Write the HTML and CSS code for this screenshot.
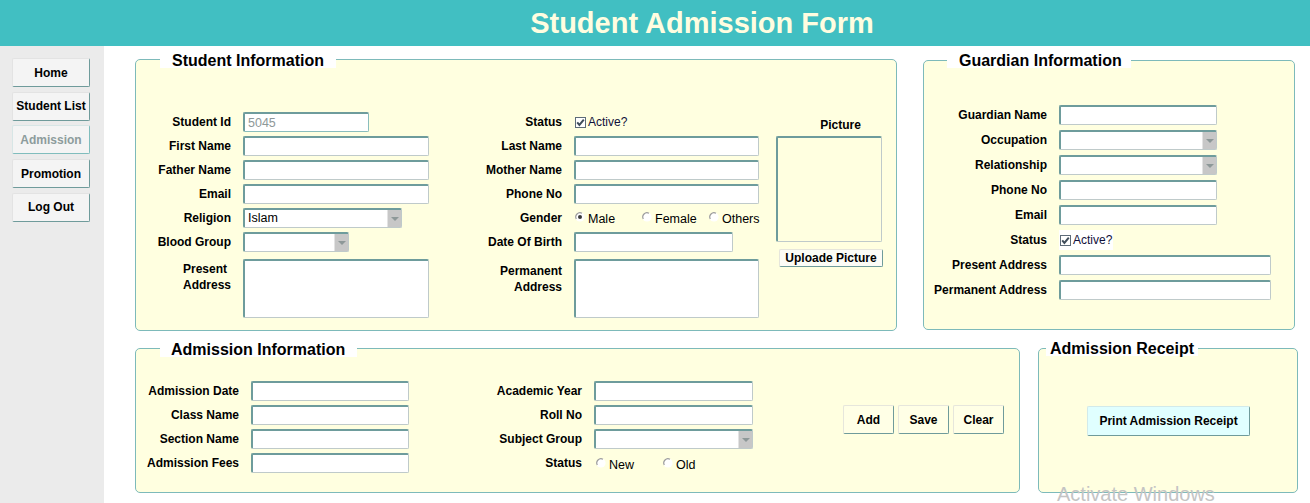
FILE: index.html
```html
<!DOCTYPE html>
<html lang="en">
<head>
<meta charset="utf-8">
<title>Student Admission Form</title>
<link rel="stylesheet" href="styles.css">
</head>
<body>
<header class="topbar"><h1 class="title">Student Admission Form</h1></header>
<div class="layout">
  <nav class="sidebar">
    <button class="nav-btn">Home</button>
    <button class="nav-btn">Student List</button>
    <button class="nav-btn is-disabled">Admission</button>
    <button class="nav-btn">Promotion</button>
    <button class="nav-btn">Log Out</button>
  </nav>
  <main class="content">
    <div class="row row-top">
      <section class="panel panel-student">
        <h2 class="legend legend-student">Student Information</h2>
        <div class="fgrid fgrid-s1">
          <span class="lbl">Student Id</span><input class="inp w126 ro" type="text" value="5045" readonly>
          <span class="lbl">First Name</span><input class="inp" type="text">
          <span class="lbl">Father Name</span><input class="inp" type="text">
          <span class="lbl">Email</span><input class="inp" type="text">
          <span class="lbl">Religion</span><div class="sel w159"><span class="sel-val">Islam</span><span class="sel-btn"><i class="tri"></i></span></div>
          <span class="lbl">Blood Group</span><div class="sel w106"><span class="sel-val"></span><span class="sel-btn"><i class="tri"></i></span></div>
          <span class="lbl lbl-ml">Present<br>Address</span><textarea class="ta"></textarea>
        </div>
        <div class="fgrid fgrid-s2">
          <span class="lbl">Status</span>
          <span class="check"><svg class="cb" width="11" height="11" viewBox="0 0 11 11"><rect x="0.5" y="0.5" width="10" height="10" fill="#fff" stroke="#5d6b78"/><path d="M2.2 5.4 L4.4 7.9 L8.8 2.6" fill="none" stroke="#3f4d5a" stroke-width="2"/></svg><span>Active?</span></span>
          <span class="lbl">Last Name</span><input class="inp" type="text">
          <span class="lbl">Mother Name</span><input class="inp" type="text">
          <span class="lbl">Phone No</span><input class="inp" type="text">
          <span class="lbl">Gender</span>
          <span class="radios radios-gender">
            <span class="radio"><svg width="10" height="10" viewBox="0 0 10 10"><circle cx="5" cy="5" r="4.6" fill="#fff"/><path d="M1.3 7 A4.2 4.2 0 0 1 7 1.3" fill="none" stroke="#9c9c9c" stroke-width="1.2"/><circle cx="5" cy="5" r="2" fill="#3a3a3a"/></svg>Male</span>
            <span class="radio"><svg width="10" height="10" viewBox="0 0 10 10"><circle cx="5" cy="5" r="4.6" fill="#fff"/><path d="M1.3 7 A4.2 4.2 0 0 1 7 1.3" fill="none" stroke="#9c9c9c" stroke-width="1.2"/></svg>Female</span>
            <span class="radio"><svg width="10" height="10" viewBox="0 0 10 10"><circle cx="5" cy="5" r="4.6" fill="#fff"/><path d="M1.3 7 A4.2 4.2 0 0 1 7 1.3" fill="none" stroke="#9c9c9c" stroke-width="1.2"/></svg>Others</span>
          </span>
          <span class="lbl">Date Of Birth</span><input class="inp w159" type="text">
          <span class="lbl lbl-mr">Permanent<br>Address</span><textarea class="ta"></textarea>
        </div>
        <div class="pic-col">
          <span class="pic-label">Picture</span>
          <div class="pic-box"></div>
          <button class="btn btn-upload">Uploade Picture</button>
        </div>
      </section>
      <section class="panel panel-guardian">
        <h2 class="legend legend-guardian">Guardian Information</h2>
        <div class="fgrid fgrid-g">
          <span class="lbl">Guardian Name</span><input class="inp w158" type="text">
          <span class="lbl">Occupation</span><div class="sel w158"><span class="sel-val"></span><span class="sel-btn"><i class="tri"></i></span></div>
          <span class="lbl">Relationship</span><div class="sel w158"><span class="sel-val"></span><span class="sel-btn"><i class="tri"></i></span></div>
          <span class="lbl">Phone No</span><input class="inp w158" type="text">
          <span class="lbl">Email</span><input class="inp w158" type="text">
          <span class="lbl">Status</span>
          <span class="check check-white"><svg class="cb" width="11" height="11" viewBox="0 0 11 11"><rect x="0.5" y="0.5" width="10" height="10" fill="#fff" stroke="#5d6b78"/><path d="M2.2 5.4 L4.4 7.9 L8.8 2.6" fill="none" stroke="#3f4d5a" stroke-width="2"/></svg><span>Active?</span></span>
          <span class="lbl">Present Address</span><input class="inp" type="text">
          <span class="lbl">Permanent Address</span><input class="inp" type="text">
        </div>
      </section>
    </div>
    <div class="row row-bottom">
      <section class="panel panel-admission">
        <h2 class="legend legend-admission">Admission Information</h2>
        <div class="fgrid fgrid-a1">
          <span class="lbl">Admission Date</span><input class="inp" type="text">
          <span class="lbl">Class Name</span><input class="inp" type="text">
          <span class="lbl">Section Name</span><input class="inp" type="text">
          <span class="lbl">Admission Fees</span><input class="inp" type="text">
        </div>
        <div class="fgrid fgrid-a2">
          <span class="lbl">Academic Year</span><input class="inp" type="text">
          <span class="lbl">Roll No</span><input class="inp" type="text">
          <span class="lbl">Subject Group</span><div class="sel"><span class="sel-val"></span><span class="sel-btn"><i class="tri"></i></span></div>
          <span class="lbl">Status</span>
          <span class="radios radios-status">
            <span class="radio"><svg width="10" height="10" viewBox="0 0 10 10"><circle cx="5" cy="5" r="4.6" fill="#fff"/><path d="M1.3 7 A4.2 4.2 0 0 1 7 1.3" fill="none" stroke="#9c9c9c" stroke-width="1.2"/></svg>New</span>
            <span class="radio"><svg width="10" height="10" viewBox="0 0 10 10"><circle cx="5" cy="5" r="4.6" fill="#fff"/><path d="M1.3 7 A4.2 4.2 0 0 1 7 1.3" fill="none" stroke="#9c9c9c" stroke-width="1.2"/></svg>Old</span>
          </span>
        </div>
        <div class="actions">
          <button class="btn btn-act">Add</button>
          <button class="btn btn-act">Save</button>
          <button class="btn btn-act">Clear</button>
        </div>
      </section>
      <section class="panel panel-receipt">
        <h2 class="legend legend-receipt">Admission Receipt</h2>
        <button class="btn btn-print">Print Admission Receipt</button>
      </section>
    </div>
  </main>
</div>
<div class="watermark">Activate Windows</div>
</body>
</html>
```

FILE: styles.css
```css
* { box-sizing: border-box; }
html, body { margin: 0; padding: 0; }
body {
  width: 1310px;
  height: 503px;
  overflow: hidden;
  position: relative;
  background: #fff;
  font-family: "Liberation Sans", Arial, sans-serif;
  font-size: 12px;
  color: #000;
}

/* header */
.topbar { height: 46px; background: #41bfc2; }
.title {
  margin: 0;
  padding-left: 94px;
  text-align: center;
  font-size: 29px;
  line-height: 46px;
  font-weight: bold;
  color: #fffde0;
}

.layout { display: flex; height: 457px; }

/* sidebar */
.sidebar {
  width: 104px;
  flex: none;
  background: #ebebeb;
  display: flex;
  flex-direction: column;
  align-items: flex-start;
  gap: 4.7px;
  padding: 12px 0 0 12px;
}
.nav-btn {
  width: 78px;
  height: 29px;
  padding: 0;
  font: bold 12px "Liberation Sans", Arial, sans-serif;
  color: #000;
  background: #f4f4f4;
  border: 1px solid;
  border-color: #e3e3e3 #6f9b9b #6f9b9b #e3e3e3;
  border-radius: 2px;
}
.nav-btn.is-disabled {
  color: #8d9c9c;
  border-color: #d7e6e6 #80bdbd #80bdbd #d7e6e6;
}

/* content */
.content {
  flex: 1;
  display: flex;
  flex-direction: column;
  gap: 17px;
  padding: 13px 0 0 31px;
}
.row { display: flex; align-items: flex-start; }
.row-top { gap: 26px; }
.row-bottom { gap: 18px; }

.panel {
  position: relative;
  display: flex;
  align-items: flex-start;
  background: #ffffe0;
  border: 1px solid #7dbaba;
  border-radius: 5px;
}
.legend {
  position: absolute;
  top: -7px;
  left: 24px;
  margin: 0;
  padding: 0 12px;
  background: #fff;
  font-size: 16px;
  line-height: 15px;
  font-weight: bold;
  white-space: nowrap;
}
.legend-guardian { left: 23px; top: -8px; padding: 0 9px 0 12px; }
.legend-admission { padding: 0 12px 0 11px; }
.legend-receipt { left: 7px; top: -8px; padding: 0 4px; }

.panel-student { width: 762px; height: 272px; padding: 52px 0 0 5px; }
.panel-guardian { width: 372px; height: 270px; margin-top: 1px; padding: 44px 0 0 3px; }
.panel-admission { width: 885px; height: 145px; padding: 32px 0 0 8px; }
.panel-receipt { width: 260px; height: 145px; align-items: center; justify-content: center; }

/* form grids */
.fgrid {
  display: grid;
  column-gap: 12px;
  row-gap: 4px;
  grid-auto-rows: minmax(20px, auto);
}
.fgrid-s1 { grid-template-columns: 90px 186px; }
.fgrid-s2 { grid-template-columns: 110px 185px; margin-left: 23px; }
.fgrid-g { grid-template-columns: 120px 212px; row-gap: 5px; }
.fgrid-a1 { grid-template-columns: 95px 158px; }
.fgrid-a2 { grid-template-columns: 100px 159px; margin-left: 73px; }

.lbl {
  align-self: center;
  text-align: right;
  font-weight: bold;
  line-height: 14px;
  white-space: nowrap;
}
.lbl-ml {
  align-self: start;
  justify-self: end;
  text-align: left;
  padding-top: 5px;
  line-height: 16px;
}
.lbl-mr {
  align-self: start;
  text-align: right;
  padding-top: 8px;
  line-height: 15.5px;
}

.inp, .ta, .sel, .pic-box {
  border-style: solid;
  border-width: 2px 1px 1px 2px;
  border-color: #6e9c9c #bfcaca #bfcaca #6e9c9c;
  border-radius: 2px;
  background: #fff;
}
.inp {
  height: 20px;
  width: 100%;
  padding: 0 3px;
  font: 12.5px "Liberation Sans", Arial, sans-serif;
  color: #000;
  outline: none;
}
.inp.ro { color: #8e9898; border-color: #6e9c9c #8abdbd #8abdbd #6e9c9c; }
.w106 { width: 106px; }
.w126 { width: 126px; }
.w158 { width: 158px; }
.w159 { width: 159px; }

.ta {
  display: block;
  width: 100%;
  height: 59px;
  margin-top: 3px;
  resize: none;
  outline: none;
}

.sel {
  height: 20px;
  display: flex;
  align-items: stretch;
}
.sel-val {
  flex: 1;
  padding-left: 3px;
  font-size: 12.5px;
  line-height: 17px;
}
.sel-btn {
  width: 14px;
  background: #c7c7c7;
  border-left: 1px solid #e3e3e3;
  display: flex;
  align-items: center;
  justify-content: center;
}
.tri {
  width: 0;
  height: 0;
  border-left: 4px solid transparent;
  border-right: 4px solid transparent;
  border-top: 4px solid #8d9898;
}

/* checkbox & radios */
.check {
  align-self: center;
  justify-self: start;
  display: flex;
  align-items: center;
  gap: 2px;
  margin-left: 1px;
  color: #10103a;
  font-size: 12px;
}
.check-white { background: #fff; height: 20px; padding: 0 1px; margin-left: 0; }
.cb { display: block; }

.radios { display: flex; align-items: center; }
.radios-gender { padding-left: 1px; }
.radios-status { padding-left: 2px; }
.radio {
  width: 67px;
  display: flex;
  align-items: center;
  font-size: 12.5px;
  line-height: 14px;
  padding-top: 2px;
  flex: none;
}
.radio svg { display: block; margin: 0 3px 5px 0; flex: none; }
.radios-status .radio { padding-top: 4px; }

/* picture */
.pic-col {
  width: 107px;
  margin-left: 17px;
  display: flex;
  flex-direction: column;
  align-items: flex-start;
}
.pic-label {
  display: block;
  width: 107px;
  height: 24px;
  line-height: 26px;
  padding-left: 22px;
  text-align: center;
  font-weight: bold;
}
.pic-box { width: 106px; height: 106px; background: transparent; }

/* buttons */
.btn {
  padding: 0;
  font: bold 12px "Liberation Sans", Arial, sans-serif;
  color: #000;
  border: 1px solid;
  border-color: #e6e6dc #6f9b9b #6f9b9b #e6e6dc;
  border-radius: 2px;
  background: #fffff2;
}
.btn-upload { width: 104px; height: 18px; margin: 7px 0 0 3px; background: #fcfcf6; }
.actions { display: flex; gap: 4px; margin: 24px 0 0 90px; }
.btn-act { width: 51px; height: 29px; background: #ffffe6; }
.btn-print {
  width: 163px;
  height: 30px;
  background: #e0ffff;
  border-color: #d2eaea #6f9b9b #6f9b9b #d2eaea;
  margin-left: 1px;
}

.watermark {
  position: absolute;
  left: 1057px;
  top: 484px;
  font-size: 20px;
  line-height: 20px;
  color: #c4c4c4;
  white-space: nowrap;
}
```
